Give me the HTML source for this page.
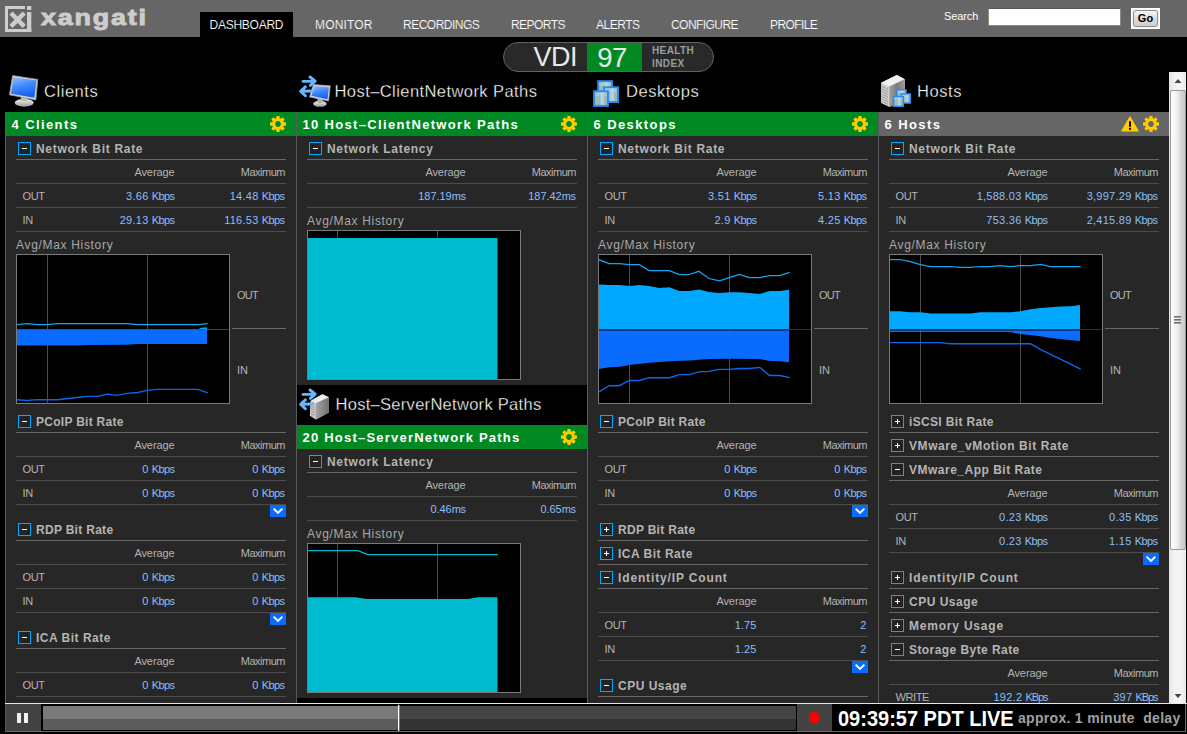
<!DOCTYPE html><html><head><meta charset="utf-8"><title>Xangati Dashboard</title><style>
html,body{margin:0;padding:0;background:#000;}
body{width:1187px;height:734px;overflow:hidden;position:relative;font-family:"Liberation Sans",sans-serif;color:#b4b4b4;font-size:11px;}
div,span,svg{position:absolute;box-sizing:border-box;}
.t{white-space:nowrap;}
#hdr{left:0;top:0;width:1187px;height:37px;background:#666;}
.nav{top:18px;height:15px;line-height:15px;font-size:12px;color:#fff;letter-spacing:-0.35px;}
.coltitle{font-size:16.5px;color:#fff;height:24px;line-height:24px;letter-spacing:0.55px;-webkit-text-stroke:0.3px #000;}
.bar{height:24px;background:#008822;}
.bartitle{left:5.5px;top:0;height:24px;line-height:26px;font-size:13px;font-weight:bold;color:#fff;letter-spacing:1.4px;}
.panel{background:#272727;border-left:1px solid #5a5a5a;}
.sep{height:1px;background:#4d4d4d;}
.sect{font-size:12px;font-weight:bold;color:#b4b4b4;height:16px;line-height:16px;letter-spacing:0.7px;}
.lbl{color:#b4b4b4;height:14px;line-height:14px;font-size:11px;letter-spacing:-0.1px;}
.val{color:#8bbefc;height:14px;line-height:14px;font-size:11px;text-align:right;letter-spacing:-0.1px;}
.hist{color:#a8a8a8;font-size:12px;height:16px;line-height:16px;letter-spacing:0.68px;}
.box{width:13px;height:13px;border:1px solid #00aaff;background:#232323;}
.dd{width:16px;height:12px;background:#0a6cff;}
.chart{width:214px;height:150px;border:1px solid #7a7a7a;background:#000;overflow:hidden;}
</style></head><body>
<div id="hdr">
<svg style="left:5px;top:6px" width="28" height="27" viewBox="0 0 28 27"><g fill="#cdcdcd"><rect x="0" y="0" width="20" height="3"/><rect x="0" y="0" width="3" height="26"/><rect x="0" y="23" width="26.3" height="3"/><rect x="22" y="6" width="4.3" height="20"/><rect x="22" y="0" width="4.3" height="4"/></g><path d="M6 7 L19.2 20.4 M19.2 7 L6 20.4" stroke="#cdcdcd" stroke-width="4.4" fill="none"/></svg>
<div class="t" style="left:41px;top:4px;height:28px;line-height:28px;font-size:21.5px;font-weight:bold;color:#cdcdcd;letter-spacing:1.45px;-webkit-text-stroke:0.9px #cdcdcd;transform:scaleX(1.25);transform-origin:0 0">xangati</div>
<div style="left:200px;top:12px;width:93px;height:25px;background:#000"></div>
<div class="t nav" style="left:209.5px;letter-spacing:-0.25px;-webkit-text-stroke:0.15px #000">DASHBOARD</div>
<div class="t nav" style="left:315px;letter-spacing:0.15px;-webkit-text-stroke:0.15px #666">MONITOR</div>
<div class="t nav" style="left:403px;letter-spacing:-0.5px;-webkit-text-stroke:0.15px #666">RECORDINGS</div>
<div class="t nav" style="left:511px;letter-spacing:-0.55px;-webkit-text-stroke:0.15px #666">REPORTS</div>
<div class="t nav" style="left:596px;letter-spacing:-0.5px;-webkit-text-stroke:0.15px #666">ALERTS</div>
<div class="t nav" style="left:671px;letter-spacing:-0.55px;-webkit-text-stroke:0.15px #666">CONFIGURE</div>
<div class="t nav" style="left:770px;letter-spacing:-0.6px;-webkit-text-stroke:0.15px #666">PROFILE</div>
<div class="t" style="left:944px;top:9px;height:14px;line-height:14px;font-size:11px;color:#fff;letter-spacing:-0.1px">Search</div>
<div style="left:988px;top:8px;width:133px;height:18px;background:#fff;border:1px solid #8a8a8a;border-top-color:#555"></div>
<div style="left:1131px;top:8px;width:29px;height:21px;background:#f4f4f4;border:1px solid #fff"></div>
<div style="left:1133px;top:10px;width:25px;height:17px;border:1px solid #8c8c8c;border-radius:3px;background:linear-gradient(#f6f6f6,#dcdcdc 50%,#cfcfcf)"></div>
<div class="t" style="left:1131px;top:11px;width:29px;height:14px;line-height:14px;font-size:11px;font-weight:bold;color:#000;text-align:center">Go</div>
</div>
<div style="left:503px;top:42px;width:211px;height:30px;border-radius:15px;background:#292929;border:1px solid #626262;overflow:hidden"><div style="left:83px;top:-1px;width:55px;height:30px;background:#008822"></div></div>
<div class="t" style="left:533.5px;top:42px;height:30px;line-height:30.5px;font-size:27px;color:#e8e8e8;letter-spacing:-0.5px">VDI</div>
<div class="t" style="left:584.5px;top:42px;width:55px;text-align:center;height:30px;line-height:31px;font-size:27.5px;color:#e8e8e8;letter-spacing:-0.5px">97</div>
<div class="t" style="left:652px;top:44px;height:13px;line-height:13px;font-size:10px;font-weight:bold;color:#9c9c9c;letter-spacing:0.4px">HEALTH</div>
<div class="t" style="left:652px;top:57px;height:13px;line-height:13px;font-size:10px;font-weight:bold;color:#9c9c9c;letter-spacing:0.4px">INDEX</div>
<svg style="left:8px;top:74px" width="32" height="34" viewBox="0 0 32 34"><defs><linearGradient id="mg" x1="0" y1="0" x2="0.3" y2="1"><stop offset="0" stop-color="#93bdff"/><stop offset="0.5" stop-color="#4389fb"/><stop offset="1" stop-color="#1860ee"/></linearGradient><linearGradient id="sg" x1="0" y1="0" x2="0" y2="1"><stop offset="0" stop-color="#f4f4f4"/><stop offset="1" stop-color="#9a9a9a"/></linearGradient></defs><ellipse cx="16.2" cy="28.8" rx="9.5" ry="3.9" fill="url(#sg)"/><path d="M12.5 22 L20 23.5 L19 27 L13.5 27 Z" fill="#bdbdbd"/><path d="M4.6 1.6 L29.8 5.4 L27.8 26 L1.5 20.8 Z" fill="#d6d6d6" stroke="#9b9b9b" stroke-width="0.8"/><path d="M5.4 3.2 L28.5 6.2 L26.4 23.8 L3 19.8 Z" fill="url(#mg)"/></svg>
<div class="t coltitle" style="left:44px;top:79px">Clients</div>
<svg style="left:298px;top:74px" width="34" height="34" viewBox="0 0 34 34"><ellipse cx="21.9" cy="29.8" rx="6.8" ry="3" fill="url(#sg)"/><path d="M19 24 L25 25.3 L24.3 29 L20 29 Z" fill="#b0b0b0"/><path d="M15.4 10.4 L32.3 11.8 L30.6 27.1 L11.5 23 Z" fill="#d4d4d4" stroke="#a0a0a0" stroke-width="0.6"/><path d="M16.6 12 L30.9 13.2 L29.5 25.3 L13.4 21.8 Z" fill="url(#mg)"/><g fill="none" stroke="#66b8ff" stroke-width="2.9" stroke-linecap="round" stroke-linejoin="round"><path d="M5 7.4 L16.6 7.2 M12 3 L17.2 7.2 L12.4 11.4"/><path d="M14.8 17 L3.4 17.3 M7.4 12.9 L2.6 17.3 L7.4 21.7"/></g></svg>
<div class="t coltitle" style="left:334.5px;top:79px;letter-spacing:0.43px">Host&#8211;ClientNetwork Paths</div>
<svg style="left:592px;top:75px" width="32" height="34" viewBox="0 0 32 34"><rect x="5.2" y="5.2" width="15.8" height="16" fill="#2b8bef"/><rect x="7.2" y="7.2" width="11.8" height="12" fill="#9cbab8"/><rect x="12.510000000000002" y="7.2" width="3.54" height="12" fill="#b4dcea" opacity="0.75"/><rect x="7.2" y="7.2" width="11.8" height="3.5999999999999996" fill="#b4dcea" opacity="0.45"/><rect x="10.9" y="11.3" width="16.1" height="16.7" fill="#2b8bef"/><rect x="12.9" y="13.3" width="12.100000000000001" height="12.7" fill="#9cbab8"/><rect x="18.345000000000002" y="13.3" width="3.6300000000000003" height="12.7" fill="#b4dcea" opacity="0.75"/><rect x="12.9" y="13.3" width="12.100000000000001" height="3.8099999999999996" fill="#b4dcea" opacity="0.45"/><rect x="1.1" y="15.3" width="15.8" height="16.6" fill="#2b8bef"/><rect x="3.1" y="17.3" width="11.8" height="12.600000000000001" fill="#9cbab8"/><rect x="8.41" y="17.3" width="3.54" height="12.600000000000001" fill="#b4dcea" opacity="0.75"/><rect x="3.1" y="17.3" width="11.8" height="3.7800000000000002" fill="#b4dcea" opacity="0.45"/></svg>
<div class="t coltitle" style="left:626px;top:79px">Desktops</div>
<svg style="left:880px;top:74px" width="34" height="34" viewBox="0 0 34 34"><defs><linearGradient id="sv" x1="0" y1="0" x2="1" y2="0"><stop offset="0" stop-color="#a0a0a0"/><stop offset="0.5" stop-color="#7a7a7a"/><stop offset="1" stop-color="#9a9a9a"/></linearGradient></defs><path d="M1.1 8.8 L16.9 0.9 L24.8 5.3 L24.8 26.5 L9.3 33 L1.1 29 Z" fill="#cfcfcf"/><path d="M1.1 8.8 L16.9 0.9 L24.8 5.3 L9.3 12.6 Z" fill="#f0f0f0"/><path d="M9.3 12.6 L24.8 5.3 L24.8 26.5 L9.3 33 Z" fill="url(#sv)"/><path d="M2.2 12.5 L8 15.3 M2.2 15 L8 17.8 M2.2 17.5 L8 20.3 M2.2 20 L8 22.8 M2.2 22.5 L8 25.3 M2.2 25 L8 27.8 M2.2 27.5 L8 30.3" stroke="#9a9a9a" stroke-width="1"/><rect x="16.1" y="15.1" width="10.6" height="10.6" fill="#2b8bef"/><rect x="17.6" y="16.6" width="7.6" height="7.6" fill="#9cbab8"/><rect x="21.020000000000003" y="16.6" width="2.28" height="7.6" fill="#b4dcea" opacity="0.75"/><rect x="17.6" y="16.6" width="7.6" height="2.28" fill="#b4dcea" opacity="0.45"/><rect x="20.7" y="19.2" width="10.4" height="10.6" fill="#2b8bef"/><rect x="22.2" y="20.7" width="7.4" height="7.6" fill="#9cbab8"/><rect x="25.53" y="20.7" width="2.22" height="7.6" fill="#b4dcea" opacity="0.75"/><rect x="22.2" y="20.7" width="7.4" height="2.28" fill="#b4dcea" opacity="0.45"/><rect x="12.8" y="21.9" width="11.2" height="11.2" fill="#2b8bef"/><rect x="14.3" y="23.4" width="8.2" height="8.2" fill="#9cbab8"/><rect x="17.990000000000002" y="23.4" width="2.4599999999999995" height="8.2" fill="#b4dcea" opacity="0.75"/><rect x="14.3" y="23.4" width="8.2" height="2.4599999999999995" fill="#b4dcea" opacity="0.45"/></svg>
<div class="t coltitle" style="left:917px;top:79px">Hosts</div>
<div class="panel" style="left:5px;top:112px;width:292px;height:591px"></div>
<div class="bar" style="left:6px;top:112px;width:290px;background:#008822"><div class="t bartitle">4 Clients</div><svg style="left:264px;top:4px" width="16" height="16" viewBox="-8 -8 16 16"><g fill="#ffcc00"><rect x="-1.7" y="-8" width="3.4" height="4.2" rx="0.8" transform="rotate(0)"/><rect x="-1.7" y="-8" width="3.4" height="4.2" rx="0.8" transform="rotate(45)"/><rect x="-1.7" y="-8" width="3.4" height="4.2" rx="0.8" transform="rotate(90)"/><rect x="-1.7" y="-8" width="3.4" height="4.2" rx="0.8" transform="rotate(135)"/><rect x="-1.7" y="-8" width="3.4" height="4.2" rx="0.8" transform="rotate(180)"/><rect x="-1.7" y="-8" width="3.4" height="4.2" rx="0.8" transform="rotate(225)"/><rect x="-1.7" y="-8" width="3.4" height="4.2" rx="0.8" transform="rotate(270)"/><rect x="-1.7" y="-8" width="3.4" height="4.2" rx="0.8" transform="rotate(315)"/></g><circle r="4.4" fill="none" stroke="#ffcc00" stroke-width="3"/></svg></div>
<div class="box" style="left:18px;top:142px"><div style="left:3px;top:5px;width:5px;height:1px;background:#fff"></div></div>
<div class="t sect" style="left:36px;top:141px">Network Bit Rate</div>
<div class="sep" style="left:16px;top:159px;width:270px;background:#676767"></div>
<div class="t lbl" style="left:74.5px;top:165px;width:100px;text-align:right">Average</div>
<div class="t lbl" style="left:185px;top:165px;width:100px;text-align:right;letter-spacing:-0.5px">Maximum</div>
<div class="sep" style="left:16px;top:183px;width:270px"></div>
<div class="t lbl" style="left:22.5px;top:189px;letter-spacing:-0.4px">OUT</div>
<div class="t val" style="left:54.5px;top:189px;width:120px"><span style="position:static;letter-spacing:0.25px">3.66 </span><span style="position:static;letter-spacing:-0.6px">Kbps</span></div>
<div class="t val" style="left:164.5px;top:189px;width:120px"><span style="position:static;letter-spacing:0.25px">14.48 </span><span style="position:static;letter-spacing:-0.6px">Kbps</span></div>
<div class="sep" style="left:16px;top:207px;width:270px"></div>
<div class="t lbl" style="left:22.5px;top:213px;letter-spacing:-0.4px">IN</div>
<div class="t val" style="left:54.5px;top:213px;width:120px"><span style="position:static;letter-spacing:0.25px">29.13 </span><span style="position:static;letter-spacing:-0.6px">Kbps</span></div>
<div class="t val" style="left:164.5px;top:213px;width:120px"><span style="position:static;letter-spacing:0.25px">116.53 </span><span style="position:static;letter-spacing:-0.6px">Kbps</span></div>
<div class="sep" style="left:16px;top:231px;width:270px"></div>
<div class="t hist" style="left:16px;top:237px">Avg/Max History</div>
<div class="chart" style="left:16px;top:254px"><svg style="left:-1px;top:-1px" width="214" height="150" viewBox="0 0 214 150"><path d="M31.5 0 V150 M131.5 0 V150" stroke="#4c4c4c" stroke-width="1"/><g transform="translate(0.5,0.5)"><path d="M0 75 H214" stroke="#404040" stroke-width="1"/><polygon points="0.5,75.0 0.5,91.1 60.6,91.1 70.9,90.5 110.5,90.3 121.0,89.6 190.5,89.6 190.5,75.0" fill="#0a6cff"/><polygon points="183,73.6 190.5,72.8 190.5,74.5 183,74.5" fill="#00a8ff"/><polyline points="0.4,70.2 10.5,69.1 20.7,70.2 31.0,70.2 41.0,69.1 110.5,69.1 121.0,70.2 181.4,70.2 191.2,69.1" fill="none" stroke="#12a6f2" stroke-width="1.25"/><polyline points="0.4,145.2 10.5,146.0 20.7,145.2 41.0,145.2 60.6,143.0 70.9,141.9 80.7,141.9 90.9,139.7 100.3,140.8 110.5,138.9 121.0,138.0 130.8,135.8 141.0,134.9 181.4,134.9 191.2,138.4" fill="none" stroke="#0b68ee" stroke-width="1.35"/></g></svg></div>
<div style="left:232px;top:328px;width:54px;height:1px;background:#6a6a6a"></div>
<div class="t lbl" style="left:237px;top:288px;letter-spacing:-0.7px">OUT</div>
<div class="t lbl" style="left:237px;top:363px">IN</div>
<div class="box" style="left:18px;top:415px"><div style="left:3px;top:5px;width:5px;height:1px;background:#fff"></div></div>
<div class="t sect" style="left:36px;top:414px;letter-spacing:0.28px">PCoIP Bit Rate</div>
<div class="sep" style="left:16px;top:432px;width:270px;background:#676767"></div>
<div class="t lbl" style="left:74.5px;top:438px;width:100px;text-align:right">Average</div>
<div class="t lbl" style="left:185px;top:438px;width:100px;text-align:right;letter-spacing:-0.5px">Maximum</div>
<div class="sep" style="left:16px;top:456px;width:270px"></div>
<div class="t lbl" style="left:22.5px;top:462px;letter-spacing:-0.4px">OUT</div>
<div class="t val" style="left:54.5px;top:462px;width:120px"><span style="position:static;letter-spacing:0.25px">0 </span><span style="position:static;letter-spacing:-0.6px">Kbps</span></div>
<div class="t val" style="left:164.5px;top:462px;width:120px"><span style="position:static;letter-spacing:0.25px">0 </span><span style="position:static;letter-spacing:-0.6px">Kbps</span></div>
<div class="sep" style="left:16px;top:480px;width:270px"></div>
<div class="t lbl" style="left:22.5px;top:486px;letter-spacing:-0.4px">IN</div>
<div class="t val" style="left:54.5px;top:486px;width:120px"><span style="position:static;letter-spacing:0.25px">0 </span><span style="position:static;letter-spacing:-0.6px">Kbps</span></div>
<div class="t val" style="left:164.5px;top:486px;width:120px"><span style="position:static;letter-spacing:0.25px">0 </span><span style="position:static;letter-spacing:-0.6px">Kbps</span></div>
<div class="sep" style="left:16px;top:504px;width:270px"></div>
<div class="dd" style="left:270px;top:505px"><svg style="left:0;top:0" width="16" height="12" viewBox="0 0 16 12"><path d="M3.6 3.6 L8 8 L12.4 3.6" fill="none" stroke="#fff" stroke-width="1.9"/></svg></div>
<div class="box" style="left:18px;top:523px"><div style="left:3px;top:5px;width:5px;height:1px;background:#fff"></div></div>
<div class="t sect" style="left:36px;top:522px;letter-spacing:0.3px">RDP Bit Rate</div>
<div class="sep" style="left:16px;top:540px;width:270px;background:#676767"></div>
<div class="t lbl" style="left:74.5px;top:546px;width:100px;text-align:right">Average</div>
<div class="t lbl" style="left:185px;top:546px;width:100px;text-align:right;letter-spacing:-0.5px">Maximum</div>
<div class="sep" style="left:16px;top:564px;width:270px"></div>
<div class="t lbl" style="left:22.5px;top:570px;letter-spacing:-0.4px">OUT</div>
<div class="t val" style="left:54.5px;top:570px;width:120px"><span style="position:static;letter-spacing:0.25px">0 </span><span style="position:static;letter-spacing:-0.6px">Kbps</span></div>
<div class="t val" style="left:164.5px;top:570px;width:120px"><span style="position:static;letter-spacing:0.25px">0 </span><span style="position:static;letter-spacing:-0.6px">Kbps</span></div>
<div class="sep" style="left:16px;top:588px;width:270px"></div>
<div class="t lbl" style="left:22.5px;top:594px;letter-spacing:-0.4px">IN</div>
<div class="t val" style="left:54.5px;top:594px;width:120px"><span style="position:static;letter-spacing:0.25px">0 </span><span style="position:static;letter-spacing:-0.6px">Kbps</span></div>
<div class="t val" style="left:164.5px;top:594px;width:120px"><span style="position:static;letter-spacing:0.25px">0 </span><span style="position:static;letter-spacing:-0.6px">Kbps</span></div>
<div class="sep" style="left:16px;top:612px;width:270px"></div>
<div class="dd" style="left:270px;top:613px"><svg style="left:0;top:0" width="16" height="12" viewBox="0 0 16 12"><path d="M3.6 3.6 L8 8 L12.4 3.6" fill="none" stroke="#fff" stroke-width="1.9"/></svg></div>
<div class="box" style="left:18px;top:631px"><div style="left:3px;top:5px;width:5px;height:1px;background:#fff"></div></div>
<div class="t sect" style="left:36px;top:630px;letter-spacing:0.5px">ICA Bit Rate</div>
<div class="sep" style="left:16px;top:648px;width:270px;background:#676767"></div>
<div class="t lbl" style="left:74.5px;top:654px;width:100px;text-align:right">Average</div>
<div class="t lbl" style="left:185px;top:654px;width:100px;text-align:right;letter-spacing:-0.5px">Maximum</div>
<div class="sep" style="left:16px;top:672px;width:270px"></div>
<div class="t lbl" style="left:22.5px;top:678px;letter-spacing:-0.4px">OUT</div>
<div class="t val" style="left:54.5px;top:678px;width:120px"><span style="position:static;letter-spacing:0.25px">0 </span><span style="position:static;letter-spacing:-0.6px">Kbps</span></div>
<div class="t val" style="left:164.5px;top:678px;width:120px"><span style="position:static;letter-spacing:0.25px">0 </span><span style="position:static;letter-spacing:-0.6px">Kbps</span></div>
<div class="sep" style="left:16px;top:696px;width:270px"></div>
<div class="panel" style="left:296px;top:112px;width:292px;height:273px"></div>
<div class="bar" style="left:297px;top:112px;width:290px;background:#008822"><div class="t bartitle" style="letter-spacing:1.33px">10 Host&#8211;ClientNetwork Paths</div><svg style="left:264px;top:4px" width="16" height="16" viewBox="-8 -8 16 16"><g fill="#ffcc00"><rect x="-1.7" y="-8" width="3.4" height="4.2" rx="0.8" transform="rotate(0)"/><rect x="-1.7" y="-8" width="3.4" height="4.2" rx="0.8" transform="rotate(45)"/><rect x="-1.7" y="-8" width="3.4" height="4.2" rx="0.8" transform="rotate(90)"/><rect x="-1.7" y="-8" width="3.4" height="4.2" rx="0.8" transform="rotate(135)"/><rect x="-1.7" y="-8" width="3.4" height="4.2" rx="0.8" transform="rotate(180)"/><rect x="-1.7" y="-8" width="3.4" height="4.2" rx="0.8" transform="rotate(225)"/><rect x="-1.7" y="-8" width="3.4" height="4.2" rx="0.8" transform="rotate(270)"/><rect x="-1.7" y="-8" width="3.4" height="4.2" rx="0.8" transform="rotate(315)"/></g><circle r="4.4" fill="none" stroke="#ffcc00" stroke-width="3"/></svg></div>
<div class="box" style="left:309px;top:142px"><div style="left:3px;top:5px;width:5px;height:1px;background:#fff"></div></div>
<div class="t sect" style="left:327px;top:141px">Network Latency</div>
<div class="sep" style="left:307px;top:159px;width:270px;background:#676767"></div>
<div class="t lbl" style="left:365.5px;top:165px;width:100px;text-align:right">Average</div>
<div class="t lbl" style="left:476px;top:165px;width:100px;text-align:right;letter-spacing:-0.5px">Maximum</div>
<div class="sep" style="left:307px;top:183px;width:270px"></div>
<div class="t val" style="left:345.5px;top:189px;width:120px"><span style="position:static;letter-spacing:-0.05px">187.19</span><span style="position:static;letter-spacing:-0.4px">ms</span></div>
<div class="t val" style="left:455.5px;top:189px;width:120px"><span style="position:static;letter-spacing:-0.05px">187.42</span><span style="position:static;letter-spacing:-0.4px">ms</span></div>
<div class="sep" style="left:307px;top:207px;width:270px"></div>
<div class="t hist" style="left:307px;top:213px">Avg/Max History</div>
<div class="chart" style="left:307px;top:230px"><svg style="left:-1px;top:-1px" width="214" height="150" viewBox="0 0 214 150"><path d="M30.5 0 V150 M130.5 0 V150" stroke="#4c4c4c" stroke-width="1"/><g transform="translate(0.5,0.5)"><rect x="0.5" y="7.5" width="189.5" height="142" fill="#00bad0"/></g></svg></div>
<svg style="left:298px;top:387px" width="34" height="34" viewBox="0 0 34 34"><defs><linearGradient id="sv2" x1="0" y1="0" x2="1" y2="0"><stop offset="0" stop-color="#a6a6a6"/><stop offset="1" stop-color="#6e6e6e"/></linearGradient></defs><path d="M12.4 14 L24.4 7.2 L30.9 10.2 L30.9 25.4 L17.8 32.5 L11.8 28.7 Z" fill="#c8c8c8"/><path d="M13 13.6 L24.4 7.2 L30.9 10.2 L18 16.2 Z" fill="#ededed"/><path d="M17.8 16.2 L30.9 10.2 L30.9 25.4 L17.8 32.5 Z" fill="url(#sv2)"/><path d="M13 19 L16.8 20.6 M13 21.5 L16.8 23.1 M13 24 L16.8 25.6 M13 26.5 L16.8 28.1" stroke="#9a9a9a" stroke-width="0.9"/><g fill="none" stroke="#66b8ff" stroke-width="2.9" stroke-linecap="round" stroke-linejoin="round"><path d="M5 7.4 L16.6 7.2 M12 3 L17.2 7.2 L12.4 11.4"/><path d="M14.8 17 L3.4 17.3 M7.4 12.9 L2.6 17.3 L7.4 21.7"/></g></svg>
<div class="t coltitle" style="left:335.5px;top:392px;letter-spacing:0.29px">Host&#8211;ServerNetwork Paths</div>
<div class="panel" style="left:296px;top:425px;width:292px;height:273px"></div>
<div class="bar" style="left:297px;top:425px;width:290px;background:#008822"><div class="t bartitle" style="letter-spacing:1.22px">20 Host&#8211;ServerNetwork Paths</div><svg style="left:264px;top:4px" width="16" height="16" viewBox="-8 -8 16 16"><g fill="#ffcc00"><rect x="-1.7" y="-8" width="3.4" height="4.2" rx="0.8" transform="rotate(0)"/><rect x="-1.7" y="-8" width="3.4" height="4.2" rx="0.8" transform="rotate(45)"/><rect x="-1.7" y="-8" width="3.4" height="4.2" rx="0.8" transform="rotate(90)"/><rect x="-1.7" y="-8" width="3.4" height="4.2" rx="0.8" transform="rotate(135)"/><rect x="-1.7" y="-8" width="3.4" height="4.2" rx="0.8" transform="rotate(180)"/><rect x="-1.7" y="-8" width="3.4" height="4.2" rx="0.8" transform="rotate(225)"/><rect x="-1.7" y="-8" width="3.4" height="4.2" rx="0.8" transform="rotate(270)"/><rect x="-1.7" y="-8" width="3.4" height="4.2" rx="0.8" transform="rotate(315)"/></g><circle r="4.4" fill="none" stroke="#ffcc00" stroke-width="3"/></svg></div>
<div style="left:296px;top:112px;width:1px;height:591px;background:#5a5a5a"></div>
<div class="box" style="left:309px;top:455px"><div style="left:3px;top:5px;width:5px;height:1px;background:#fff"></div></div>
<div class="t sect" style="left:327px;top:454px">Network Latency</div>
<div class="sep" style="left:307px;top:472px;width:270px;background:#676767"></div>
<div class="t lbl" style="left:365.5px;top:478px;width:100px;text-align:right">Average</div>
<div class="t lbl" style="left:476px;top:478px;width:100px;text-align:right;letter-spacing:-0.5px">Maximum</div>
<div class="sep" style="left:307px;top:496px;width:270px"></div>
<div class="t val" style="left:345.5px;top:502px;width:120px"><span style="position:static;letter-spacing:-0.05px">0.46</span><span style="position:static;letter-spacing:-0.4px">ms</span></div>
<div class="t val" style="left:455.5px;top:502px;width:120px"><span style="position:static;letter-spacing:-0.05px">0.65</span><span style="position:static;letter-spacing:-0.4px">ms</span></div>
<div class="sep" style="left:307px;top:520px;width:270px"></div>
<div class="t hist" style="left:307px;top:526px">Avg/Max History</div>
<div class="chart" style="left:307px;top:543px"><svg style="left:-1px;top:-1px" width="214" height="150" viewBox="0 0 214 150"><path d="M30.5 0 V150 M130.5 0 V150" stroke="#4c4c4c" stroke-width="1"/><g transform="translate(0.5,0.5)"><polygon points="0.4,53.8 48.0,53.8 58.9,55.4 160.2,55.4 170.0,53.8 190.0,53.8 190.0,150.0 0.4,150.0" fill="#00bad0"/><polyline points="0.4,7.2 50.6,7.2 60.0,11.1 190.5,11.1" fill="none" stroke="#00bad0" stroke-width="1.25"/></g></svg></div>
<div class="panel" style="left:587px;top:112px;width:292px;height:591px"></div>
<div class="bar" style="left:588px;top:112px;width:290px;background:#008822"><div class="t bartitle">6 Desktops</div><svg style="left:264px;top:4px" width="16" height="16" viewBox="-8 -8 16 16"><g fill="#ffcc00"><rect x="-1.7" y="-8" width="3.4" height="4.2" rx="0.8" transform="rotate(0)"/><rect x="-1.7" y="-8" width="3.4" height="4.2" rx="0.8" transform="rotate(45)"/><rect x="-1.7" y="-8" width="3.4" height="4.2" rx="0.8" transform="rotate(90)"/><rect x="-1.7" y="-8" width="3.4" height="4.2" rx="0.8" transform="rotate(135)"/><rect x="-1.7" y="-8" width="3.4" height="4.2" rx="0.8" transform="rotate(180)"/><rect x="-1.7" y="-8" width="3.4" height="4.2" rx="0.8" transform="rotate(225)"/><rect x="-1.7" y="-8" width="3.4" height="4.2" rx="0.8" transform="rotate(270)"/><rect x="-1.7" y="-8" width="3.4" height="4.2" rx="0.8" transform="rotate(315)"/></g><circle r="4.4" fill="none" stroke="#ffcc00" stroke-width="3"/></svg></div>
<div class="box" style="left:600px;top:142px"><div style="left:3px;top:5px;width:5px;height:1px;background:#fff"></div></div>
<div class="t sect" style="left:618px;top:141px">Network Bit Rate</div>
<div class="sep" style="left:598px;top:159px;width:270px;background:#676767"></div>
<div class="t lbl" style="left:656.5px;top:165px;width:100px;text-align:right">Average</div>
<div class="t lbl" style="left:767px;top:165px;width:100px;text-align:right;letter-spacing:-0.5px">Maximum</div>
<div class="sep" style="left:598px;top:183px;width:270px"></div>
<div class="t lbl" style="left:604.5px;top:189px;letter-spacing:-0.4px">OUT</div>
<div class="t val" style="left:636.5px;top:189px;width:120px"><span style="position:static;letter-spacing:0.25px">3.51 </span><span style="position:static;letter-spacing:-0.6px">Kbps</span></div>
<div class="t val" style="left:746.5px;top:189px;width:120px"><span style="position:static;letter-spacing:0.25px">5.13 </span><span style="position:static;letter-spacing:-0.6px">Kbps</span></div>
<div class="sep" style="left:598px;top:207px;width:270px"></div>
<div class="t lbl" style="left:604.5px;top:213px;letter-spacing:-0.4px">IN</div>
<div class="t val" style="left:636.5px;top:213px;width:120px"><span style="position:static;letter-spacing:0.25px">2.9 </span><span style="position:static;letter-spacing:-0.6px">Kbps</span></div>
<div class="t val" style="left:746.5px;top:213px;width:120px"><span style="position:static;letter-spacing:0.25px">4.25 </span><span style="position:static;letter-spacing:-0.6px">Kbps</span></div>
<div class="sep" style="left:598px;top:231px;width:270px"></div>
<div class="t hist" style="left:598px;top:237px">Avg/Max History</div>
<div class="chart" style="left:598px;top:254px"><svg style="left:-1px;top:-1px" width="214" height="150" viewBox="0 0 214 150"><path d="M31.5 0 V150 M131.5 0 V150" stroke="#4c4c4c" stroke-width="1"/><g transform="translate(0.5,0.5)"><polygon points="0.4,29.9 10.5,30.5 20.7,30.5 31.0,31.6 41.0,30.5 50.6,31.6 60.6,33.4 70.9,32.7 80.7,36.4 90.9,36.4 100.3,34.9 110.5,37.5 121.0,38.4 130.8,37.7 141.0,37.7 150.9,38.6 161.3,39.5 171.1,36.4 181.4,36.4 190.5,35.3 190.5,75.0 0.4,75.0" fill="#00a8ff"/><polygon points="0.4,114.5 10.5,112.7 20.7,112.3 31.0,110.5 50.6,108.3 70.9,106.8 90.9,106.0 110.5,104.6 130.8,104.2 161.3,104.6 171.1,106.4 181.4,106.8 190.5,107.7 190.5,76.0 0.4,76.0" fill="#0a6cff"/><path d="M0 75 H214" stroke="#333" stroke-width="1"/><polyline points="0.4,5.2 10.5,9.2 20.7,9.2 31.0,10.2 41.0,10.2 50.6,16.1 70.9,16.1 80.7,20.1 90.9,20.0 100.3,16.8 110.5,24.0 121.0,26.4 130.8,23.1 141.0,20.0 150.9,23.1 161.3,23.1 171.1,21.1 181.4,21.1 191.2,17.9" fill="none" stroke="#12a6f2" stroke-width="1.25"/><polyline points="0.4,137.3 10.5,131.2 20.7,131.2 31.0,126.0 41.0,126.0 50.6,123.2 70.9,123.2 80.7,120.1 90.9,120.1 100.3,117.3 110.5,116.9 121.0,114.9 130.8,114.9 141.0,114.0 150.9,114.0 161.3,112.9 171.1,121.0 181.4,121.0 191.2,123.2" fill="none" stroke="#0b68ee" stroke-width="1.35"/></g></svg></div>
<div style="left:814px;top:328px;width:54px;height:1px;background:#6a6a6a"></div>
<div class="t lbl" style="left:819px;top:288px;letter-spacing:-0.7px">OUT</div>
<div class="t lbl" style="left:819px;top:363px">IN</div>
<div class="box" style="left:600px;top:415px"><div style="left:3px;top:5px;width:5px;height:1px;background:#fff"></div></div>
<div class="t sect" style="left:618px;top:414px;letter-spacing:0.28px">PCoIP Bit Rate</div>
<div class="sep" style="left:598px;top:432px;width:270px;background:#676767"></div>
<div class="t lbl" style="left:656.5px;top:438px;width:100px;text-align:right">Average</div>
<div class="t lbl" style="left:767px;top:438px;width:100px;text-align:right;letter-spacing:-0.5px">Maximum</div>
<div class="sep" style="left:598px;top:456px;width:270px"></div>
<div class="t lbl" style="left:604.5px;top:462px;letter-spacing:-0.4px">OUT</div>
<div class="t val" style="left:636.5px;top:462px;width:120px"><span style="position:static;letter-spacing:0.25px">0 </span><span style="position:static;letter-spacing:-0.6px">Kbps</span></div>
<div class="t val" style="left:746.5px;top:462px;width:120px"><span style="position:static;letter-spacing:0.25px">0 </span><span style="position:static;letter-spacing:-0.6px">Kbps</span></div>
<div class="sep" style="left:598px;top:480px;width:270px"></div>
<div class="t lbl" style="left:604.5px;top:486px;letter-spacing:-0.4px">IN</div>
<div class="t val" style="left:636.5px;top:486px;width:120px"><span style="position:static;letter-spacing:0.25px">0 </span><span style="position:static;letter-spacing:-0.6px">Kbps</span></div>
<div class="t val" style="left:746.5px;top:486px;width:120px"><span style="position:static;letter-spacing:0.25px">0 </span><span style="position:static;letter-spacing:-0.6px">Kbps</span></div>
<div class="sep" style="left:598px;top:504px;width:270px"></div>
<div class="dd" style="left:852px;top:505px"><svg style="left:0;top:0" width="16" height="12" viewBox="0 0 16 12"><path d="M3.6 3.6 L8 8 L12.4 3.6" fill="none" stroke="#fff" stroke-width="1.9"/></svg></div>
<div class="box" style="left:600px;top:523px"><div style="left:3px;top:5px;width:5px;height:1px;background:#fff"></div><div style="left:5px;top:3px;width:1px;height:5px;background:#fff"></div></div>
<div class="t sect" style="left:618px;top:522px;letter-spacing:0.3px">RDP Bit Rate</div>
<div class="sep" style="left:598px;top:540px;width:270px;background:#676767"></div>
<div class="box" style="left:600px;top:547px"><div style="left:3px;top:5px;width:5px;height:1px;background:#fff"></div><div style="left:5px;top:3px;width:1px;height:5px;background:#fff"></div></div>
<div class="t sect" style="left:618px;top:546px;letter-spacing:0.5px">ICA Bit Rate</div>
<div class="sep" style="left:598px;top:564px;width:270px;background:#676767"></div>
<div class="box" style="left:600px;top:571px"><div style="left:3px;top:5px;width:5px;height:1px;background:#fff"></div></div>
<div class="t sect" style="left:618px;top:570px;letter-spacing:0.86px">Identity/IP Count</div>
<div class="sep" style="left:598px;top:588px;width:270px;background:#676767"></div>
<div class="t lbl" style="left:656.5px;top:594px;width:100px;text-align:right">Average</div>
<div class="t lbl" style="left:767px;top:594px;width:100px;text-align:right;letter-spacing:-0.5px">Maximum</div>
<div class="sep" style="left:598px;top:612px;width:270px"></div>
<div class="t lbl" style="left:604.5px;top:618px;letter-spacing:-0.4px">OUT</div>
<div class="t val" style="left:636.5px;top:618px;width:120px"><span style="position:static;letter-spacing:0.1px">1.75</span></div>
<div class="t val" style="left:746.5px;top:618px;width:120px"><span style="position:static;letter-spacing:0.1px">2</span></div>
<div class="sep" style="left:598px;top:636px;width:270px"></div>
<div class="t lbl" style="left:604.5px;top:642px;letter-spacing:-0.4px">IN</div>
<div class="t val" style="left:636.5px;top:642px;width:120px"><span style="position:static;letter-spacing:0.1px">1.25</span></div>
<div class="t val" style="left:746.5px;top:642px;width:120px"><span style="position:static;letter-spacing:0.1px">2</span></div>
<div class="sep" style="left:598px;top:660px;width:270px"></div>
<div class="dd" style="left:852px;top:661px"><svg style="left:0;top:0" width="16" height="12" viewBox="0 0 16 12"><path d="M3.6 3.6 L8 8 L12.4 3.6" fill="none" stroke="#fff" stroke-width="1.9"/></svg></div>
<div class="box" style="left:600px;top:679px"><div style="left:3px;top:5px;width:5px;height:1px;background:#fff"></div></div>
<div class="t sect" style="left:618px;top:678px;letter-spacing:0.5px">CPU Usage</div>
<div class="sep" style="left:598px;top:696px;width:270px;background:#676767"></div>
<div class="panel" style="left:878px;top:112px;width:291px;height:591px"></div>
<div class="bar" style="left:879px;top:112px;width:291px;background:#666"><div class="t bartitle">6 Hosts</div><svg style="left:242px;top:4px" width="18" height="16" viewBox="0 0 18 16"><path d="M9 1 L17.1 14.9 H0.9 Z" fill="#ffcc00" stroke="#ffcc00" stroke-width="1.2" stroke-linejoin="round"/><rect x="8" y="5.2" width="2" height="5.6" fill="#000"/><rect x="8" y="11.8" width="2" height="2" fill="#000"/></svg><svg style="left:264px;top:4px" width="16" height="16" viewBox="-8 -8 16 16"><g fill="#ffcc00"><rect x="-1.7" y="-8" width="3.4" height="4.2" rx="0.8" transform="rotate(0)"/><rect x="-1.7" y="-8" width="3.4" height="4.2" rx="0.8" transform="rotate(45)"/><rect x="-1.7" y="-8" width="3.4" height="4.2" rx="0.8" transform="rotate(90)"/><rect x="-1.7" y="-8" width="3.4" height="4.2" rx="0.8" transform="rotate(135)"/><rect x="-1.7" y="-8" width="3.4" height="4.2" rx="0.8" transform="rotate(180)"/><rect x="-1.7" y="-8" width="3.4" height="4.2" rx="0.8" transform="rotate(225)"/><rect x="-1.7" y="-8" width="3.4" height="4.2" rx="0.8" transform="rotate(270)"/><rect x="-1.7" y="-8" width="3.4" height="4.2" rx="0.8" transform="rotate(315)"/></g><circle r="4.4" fill="none" stroke="#ffcc00" stroke-width="3"/></svg></div>
<div class="box" style="left:891px;top:142px"><div style="left:3px;top:5px;width:5px;height:1px;background:#fff"></div></div>
<div class="t sect" style="left:909px;top:141px">Network Bit Rate</div>
<div class="sep" style="left:889px;top:159px;width:270px;background:#676767"></div>
<div class="t lbl" style="left:947.5px;top:165px;width:100px;text-align:right">Average</div>
<div class="t lbl" style="left:1058px;top:165px;width:100px;text-align:right;letter-spacing:-0.5px">Maximum</div>
<div class="sep" style="left:889px;top:183px;width:270px"></div>
<div class="t lbl" style="left:895.5px;top:189px;letter-spacing:-0.4px">OUT</div>
<div class="t val" style="left:927.5px;top:189px;width:120px"><span style="position:static;letter-spacing:0.25px">1,588.03 </span><span style="position:static;letter-spacing:-0.6px">Kbps</span></div>
<div class="t val" style="left:1037.5px;top:189px;width:120px"><span style="position:static;letter-spacing:0.25px">3,997.29 </span><span style="position:static;letter-spacing:-0.6px">Kbps</span></div>
<div class="sep" style="left:889px;top:207px;width:270px"></div>
<div class="t lbl" style="left:895.5px;top:213px;letter-spacing:-0.4px">IN</div>
<div class="t val" style="left:927.5px;top:213px;width:120px"><span style="position:static;letter-spacing:0.25px">753.36 </span><span style="position:static;letter-spacing:-0.6px">Kbps</span></div>
<div class="t val" style="left:1037.5px;top:213px;width:120px"><span style="position:static;letter-spacing:0.25px">2,415.89 </span><span style="position:static;letter-spacing:-0.6px">Kbps</span></div>
<div class="sep" style="left:889px;top:231px;width:270px"></div>
<div class="t hist" style="left:889px;top:237px">Avg/Max History</div>
<div class="chart" style="left:889px;top:254px"><svg style="left:-1px;top:-1px" width="214" height="150" viewBox="0 0 214 150"><path d="M31.5 0 V150 M131.5 0 V150" stroke="#4c4c4c" stroke-width="1"/><g transform="translate(0.5,0.5)"><polygon points="0.4,56.7 10.5,56.7 20.7,57.8 31.0,57.8 41.0,58.9 80.7,58.9 90.9,57.8 121.0,57.8 130.8,56.7 141.0,54.7 150.9,53.6 161.3,52.8 171.1,51.9 181.4,51.7 190.5,50.6 190.5,75.0 0.4,75.0" fill="#00a8ff"/><polygon points="0.4,77.6 121.0,77.6 130.8,79.6 150.9,81.8 161.3,83.5 181.4,85.7 190.5,86.5 190.5,76.0 0.4,76.0" fill="#0a6cff"/><path d="M0 75 H214" stroke="#333" stroke-width="1"/><polyline points="0.4,5.0 10.5,5.0 20.7,7.2 31.0,10.2 41.0,12.0 60.6,12.0 70.9,12.9 80.7,12.9 90.9,12.0 100.3,12.0 110.5,11.1 121.0,12.0 130.8,11.1 141.0,11.1 150.9,10.0 161.3,12.0 191.2,12.0" fill="none" stroke="#12a6f2" stroke-width="1.25"/><polyline points="0.4,88.1 50.6,88.1 60.6,89.2 141.0,89.2 150.9,94.8 191.2,114.7" fill="none" stroke="#0b68ee" stroke-width="1.35"/></g></svg></div>
<div style="left:1105px;top:328px;width:54px;height:1px;background:#6a6a6a"></div>
<div class="t lbl" style="left:1110px;top:288px;letter-spacing:-0.7px">OUT</div>
<div class="t lbl" style="left:1110px;top:363px">IN</div>
<div class="box" style="left:891px;top:415px"><div style="left:3px;top:5px;width:5px;height:1px;background:#fff"></div><div style="left:5px;top:3px;width:1px;height:5px;background:#fff"></div></div>
<div class="t sect" style="left:909px;top:414px;letter-spacing:0.34px">iSCSI Bit Rate</div>
<div class="sep" style="left:889px;top:432px;width:270px;background:#676767"></div>
<div class="box" style="left:891px;top:439px"><div style="left:3px;top:5px;width:5px;height:1px;background:#fff"></div><div style="left:5px;top:3px;width:1px;height:5px;background:#fff"></div></div>
<div class="t sect" style="left:909px;top:438px;letter-spacing:0.58px">VMware_vMotion Bit Rate</div>
<div class="sep" style="left:889px;top:456px;width:270px;background:#676767"></div>
<div class="box" style="left:891px;top:463px"><div style="left:3px;top:5px;width:5px;height:1px;background:#fff"></div></div>
<div class="t sect" style="left:909px;top:462px;letter-spacing:0.5px">VMware_App Bit Rate</div>
<div class="sep" style="left:889px;top:480px;width:270px;background:#676767"></div>
<div class="t lbl" style="left:947.5px;top:486px;width:100px;text-align:right">Average</div>
<div class="t lbl" style="left:1058px;top:486px;width:100px;text-align:right;letter-spacing:-0.5px">Maximum</div>
<div class="sep" style="left:889px;top:504px;width:270px"></div>
<div class="t lbl" style="left:895.5px;top:510px;letter-spacing:-0.4px">OUT</div>
<div class="t val" style="left:927.5px;top:510px;width:120px"><span style="position:static;letter-spacing:0.25px">0.23 </span><span style="position:static;letter-spacing:-0.6px">Kbps</span></div>
<div class="t val" style="left:1037.5px;top:510px;width:120px"><span style="position:static;letter-spacing:0.25px">0.35 </span><span style="position:static;letter-spacing:-0.6px">Kbps</span></div>
<div class="sep" style="left:889px;top:528px;width:270px"></div>
<div class="t lbl" style="left:895.5px;top:534px;letter-spacing:-0.4px">IN</div>
<div class="t val" style="left:927.5px;top:534px;width:120px"><span style="position:static;letter-spacing:0.25px">0.23 </span><span style="position:static;letter-spacing:-0.6px">Kbps</span></div>
<div class="t val" style="left:1037.5px;top:534px;width:120px"><span style="position:static;letter-spacing:0.25px">1.15 </span><span style="position:static;letter-spacing:-0.6px">Kbps</span></div>
<div class="sep" style="left:889px;top:552px;width:270px"></div>
<div class="dd" style="left:1143px;top:553px"><svg style="left:0;top:0" width="16" height="12" viewBox="0 0 16 12"><path d="M3.6 3.6 L8 8 L12.4 3.6" fill="none" stroke="#fff" stroke-width="1.9"/></svg></div>
<div class="box" style="left:891px;top:571px"><div style="left:3px;top:5px;width:5px;height:1px;background:#fff"></div><div style="left:5px;top:3px;width:1px;height:5px;background:#fff"></div></div>
<div class="t sect" style="left:909px;top:570px;letter-spacing:0.86px">Identity/IP Count</div>
<div class="sep" style="left:889px;top:588px;width:270px;background:#676767"></div>
<div class="box" style="left:891px;top:595px"><div style="left:3px;top:5px;width:5px;height:1px;background:#fff"></div><div style="left:5px;top:3px;width:1px;height:5px;background:#fff"></div></div>
<div class="t sect" style="left:909px;top:594px;letter-spacing:0.5px">CPU Usage</div>
<div class="sep" style="left:889px;top:612px;width:270px;background:#676767"></div>
<div class="box" style="left:891px;top:619px"><div style="left:3px;top:5px;width:5px;height:1px;background:#fff"></div><div style="left:5px;top:3px;width:1px;height:5px;background:#fff"></div></div>
<div class="t sect" style="left:909px;top:618px;letter-spacing:0.79px">Memory Usage</div>
<div class="sep" style="left:889px;top:636px;width:270px;background:#676767"></div>
<div class="box" style="left:891px;top:643px"><div style="left:3px;top:5px;width:5px;height:1px;background:#fff"></div></div>
<div class="t sect" style="left:909px;top:642px;letter-spacing:0.43px">Storage Byte Rate</div>
<div class="sep" style="left:889px;top:660px;width:270px;background:#676767"></div>
<div class="t lbl" style="left:947.5px;top:666px;width:100px;text-align:right">Average</div>
<div class="t lbl" style="left:1058px;top:666px;width:100px;text-align:right;letter-spacing:-0.5px">Maximum</div>
<div class="sep" style="left:889px;top:684px;width:270px"></div>
<div class="t lbl" style="left:895.5px;top:690px;letter-spacing:-0.4px">WRITE</div>
<div class="t val" style="left:927.5px;top:690px;width:120px"><span style="position:static;letter-spacing:0.25px">192.2 </span><span style="position:static;letter-spacing:-1.1px">KBps</span></div>
<div class="t val" style="left:1037.5px;top:690px;width:120px"><span style="position:static;letter-spacing:0.25px">397 </span><span style="position:static;letter-spacing:-1.1px">KBps</span></div>
<div style="left:1169px;top:72px;width:18px;height:631px;background:#000"></div>
<div style="left:1169px;top:72px;width:17px;height:631px;background:linear-gradient(90deg,#e2e2e2,#f2f2f2 30%,#f4f4f4 70%,#e8e8e8);"></div>
<div style="left:1170px;top:90px;width:16px;height:460px;border:1px solid #9a9a9a;border-radius:2px;background:linear-gradient(90deg,#fdfdfd,#f2f2f4 40%,#d4d4d8 75%,#c8c8cc)"></div>
<svg style="left:1169px;top:72px" width="17" height="18" viewBox="0 0 17 18"><path d="M5.5 11 L9 7 L12.5 11 Z" fill="#444"/></svg>
<svg style="left:1169px;top:686px" width="17" height="17" viewBox="0 0 17 17"><path d="M5.5 8 L9 12 L12.5 8 Z" fill="#444"/></svg>
<div style="left:1174px;top:316px;width:7px;height:2px;background:linear-gradient(#555,#bbb)"></div>
<div style="left:1174px;top:319px;width:7px;height:2px;background:linear-gradient(#555,#bbb)"></div>
<div style="left:1174px;top:322px;width:7px;height:2px;background:linear-gradient(#555,#bbb)"></div>
<div style="left:0;top:703px;width:1187px;height:31px;background:#000"></div>
<div style="left:5px;top:703px;width:1182px;height:1px;background:#e6e6e6"></div>
<div style="left:5px;top:704px;width:36px;height:28px;background:#434343;border-bottom:1px solid #6b6b6b;border-left:1px solid #555"></div>
<div style="left:17px;top:713px;width:4px;height:10px;background:#f2f2f2"></div>
<div style="left:24px;top:713px;width:4px;height:10px;background:#f2f2f2"></div>
<div style="left:41px;top:704px;width:756px;height:28px;background:#000;border-bottom:1px solid #6b6b6b"></div>
<div style="left:43px;top:706px;width:355px;height:24px;background:linear-gradient(#7a7a7a 0,#7a7a7a 54%,#5d5d5d 54%,#5d5d5d)"></div>
<div style="left:398px;top:706px;width:398px;height:24px;background:linear-gradient(#444 0,#444 54%,#333 54%,#333)"></div>
<div style="left:398px;top:705px;width:1px;height:26px;background:#fff"></div><div style="left:399px;top:705px;width:1px;height:26px;background:#fff;opacity:0.3"></div>
<div style="left:797px;top:704px;width:35px;height:28px;background:#434343;border-bottom:1px solid #6b6b6b"></div>
<div style="left:808.5px;top:712.3px;width:11px;height:11px;border-radius:6px;background:#f00"></div>
<div style="left:832px;top:704px;width:354px;height:28px;background:#000;border-bottom:1px solid #6b6b6b;border-right:1px solid #6b6b6b"></div>
<div class="t" style="left:838px;top:706px;height:26px;line-height:26px;font-size:20px;font-weight:bold;color:#fff;letter-spacing:0px;transform:scaleY(1.07);transform-origin:0 50%">09:39:57 PDT LIVE</div>
<div class="t" style="left:1018px;top:706px;height:24px;line-height:24px;font-size:14px;font-weight:bold;color:#a0a0a0;letter-spacing:0.3px;white-space:pre">approx. 1 minute  delay</div>
</body></html>
